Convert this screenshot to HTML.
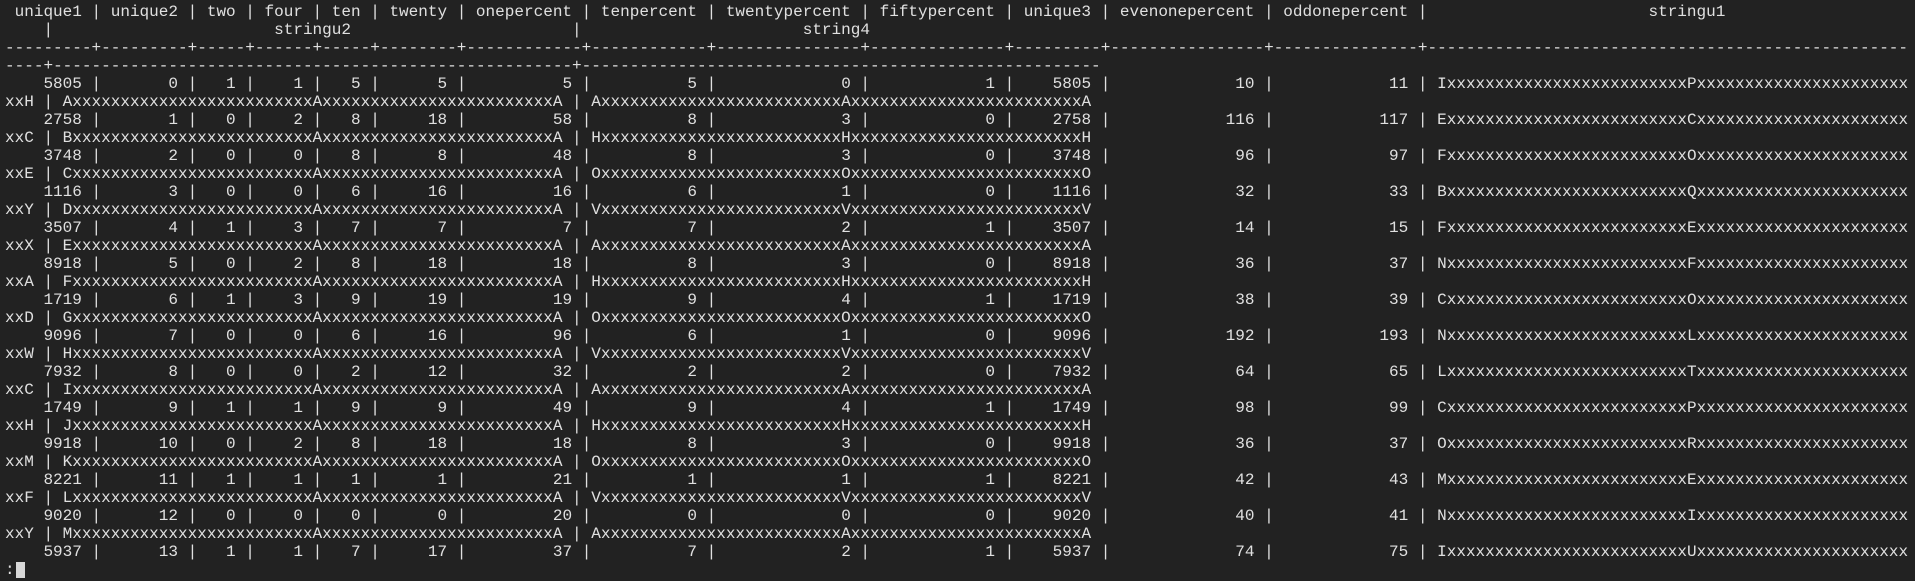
<!DOCTYPE html>
<html><head><meta charset="utf-8">
<style>
html,body{margin:0;padding:0;background:#222222;}
body{width:1915px;height:581px;overflow:hidden;position:relative;}
#t{position:absolute;left:5px;top:0;width:1910px;height:581px;font-family:"Liberation Mono",monospace;font-size:16.03px;color:#e0e0e0;}
#t div{position:absolute;left:0;height:18px;line-height:18px;white-space:pre;}
b{display:inline-block;text-align:right;font-weight:normal;vertical-align:top;height:18px;}
u{display:inline-block;text-decoration:none;overflow:hidden;vertical-align:top;height:18px;white-space:pre;}
.a{width:7ch}.c{width:3ch}.d{width:4ch}.f{width:6ch}.g{width:10ch}.i{width:13ch}.j{width:12ch}.l{width:14ch}
.p{width:25ch}.q{width:22ch}.o{width:24ch}
.d9{width:9ch}.d5{width:5ch}.d6{width:6ch}.d8{width:8ch}.d12{width:12ch}.d15{width:15ch}.d14{width:14ch}.d16{width:16ch}.d50{width:50ch}.d54{width:54ch}.d4{width:4ch}
#cur{position:absolute;left:16px;top:562px;width:9px;height:16px;background:#d8d8d8;}
</style></head><body>
<div id="t">
<div style="top:3px"> unique1 | unique2 | two | four | ten | twenty | onepercent | tenpercent | twentypercent | fiftypercent | unique3 | evenonepercent | oddonepercent |                       stringu1</div>
<div style="top:21px">    |                       stringu2                       |                       string4</div>
<div style="top:39px"><u class="d9">------------------</u>+<u class="d9">------------------</u>+<u class="d5">----------</u>+<u class="d6">----------</u>+<u class="d5">----------</u>+<u class="d8">------------</u>+<u class="d12">----------------</u>+<u class="d12">----------------</u>+<u class="d15">--------------------</u>+<u class="d14">--------------------</u>+<u class="d9">------------------</u>+<u class="d16">--------------------</u>+<u class="d15">--------------------</u>+<u class="d50">------------------------------------------------------------</u></div>
<div style="top:57px"><u class="d4">--------</u>+<u class="d54">------------------------------------------------------------</u>+<u class="d54">------------------------------------------------------------</u></div>
<div style="top:75px"> <b class=a>5805</b> | <b class=a>0</b> | <b class=c>1</b> | <b class=d>1</b> | <b class=c>5</b> | <b class=f>5</b> | <b class=g>5</b> | <b class=g>5</b> | <b class=i>0</b> | <b class=j>1</b> | <b class=a>5805</b> | <b class=l>10</b> | <b class=i>11</b> | I<u class=p>xxxxxxxxxxxxxxxxxxxxxxxxxxxxxx</u>P<u class=q>xxxxxxxxxxxxxxxxxxxxxxxxxxxxxx</u></div>
<div style="top:93px">xxH | A<u class=p>xxxxxxxxxxxxxxxxxxxxxxxxxxxxxx</u>A<u class=o>xxxxxxxxxxxxxxxxxxxxxxxxxxxxxx</u>A | A<u class=p>xxxxxxxxxxxxxxxxxxxxxxxxxxxxxx</u>A<u class=o>xxxxxxxxxxxxxxxxxxxxxxxxxxxxxx</u>A</div>
<div style="top:111px"> <b class=a>2758</b> | <b class=a>1</b> | <b class=c>0</b> | <b class=d>2</b> | <b class=c>8</b> | <b class=f>18</b> | <b class=g>58</b> | <b class=g>8</b> | <b class=i>3</b> | <b class=j>0</b> | <b class=a>2758</b> | <b class=l>116</b> | <b class=i>117</b> | E<u class=p>xxxxxxxxxxxxxxxxxxxxxxxxxxxxxx</u>C<u class=q>xxxxxxxxxxxxxxxxxxxxxxxxxxxxxx</u></div>
<div style="top:129px">xxC | B<u class=p>xxxxxxxxxxxxxxxxxxxxxxxxxxxxxx</u>A<u class=o>xxxxxxxxxxxxxxxxxxxxxxxxxxxxxx</u>A | H<u class=p>xxxxxxxxxxxxxxxxxxxxxxxxxxxxxx</u>H<u class=o>xxxxxxxxxxxxxxxxxxxxxxxxxxxxxx</u>H</div>
<div style="top:147px"> <b class=a>3748</b> | <b class=a>2</b> | <b class=c>0</b> | <b class=d>0</b> | <b class=c>8</b> | <b class=f>8</b> | <b class=g>48</b> | <b class=g>8</b> | <b class=i>3</b> | <b class=j>0</b> | <b class=a>3748</b> | <b class=l>96</b> | <b class=i>97</b> | F<u class=p>xxxxxxxxxxxxxxxxxxxxxxxxxxxxxx</u>O<u class=q>xxxxxxxxxxxxxxxxxxxxxxxxxxxxxx</u></div>
<div style="top:165px">xxE | C<u class=p>xxxxxxxxxxxxxxxxxxxxxxxxxxxxxx</u>A<u class=o>xxxxxxxxxxxxxxxxxxxxxxxxxxxxxx</u>A | O<u class=p>xxxxxxxxxxxxxxxxxxxxxxxxxxxxxx</u>O<u class=o>xxxxxxxxxxxxxxxxxxxxxxxxxxxxxx</u>O</div>
<div style="top:183px"> <b class=a>1116</b> | <b class=a>3</b> | <b class=c>0</b> | <b class=d>0</b> | <b class=c>6</b> | <b class=f>16</b> | <b class=g>16</b> | <b class=g>6</b> | <b class=i>1</b> | <b class=j>0</b> | <b class=a>1116</b> | <b class=l>32</b> | <b class=i>33</b> | B<u class=p>xxxxxxxxxxxxxxxxxxxxxxxxxxxxxx</u>Q<u class=q>xxxxxxxxxxxxxxxxxxxxxxxxxxxxxx</u></div>
<div style="top:201px">xxY | D<u class=p>xxxxxxxxxxxxxxxxxxxxxxxxxxxxxx</u>A<u class=o>xxxxxxxxxxxxxxxxxxxxxxxxxxxxxx</u>A | V<u class=p>xxxxxxxxxxxxxxxxxxxxxxxxxxxxxx</u>V<u class=o>xxxxxxxxxxxxxxxxxxxxxxxxxxxxxx</u>V</div>
<div style="top:219px"> <b class=a>3507</b> | <b class=a>4</b> | <b class=c>1</b> | <b class=d>3</b> | <b class=c>7</b> | <b class=f>7</b> | <b class=g>7</b> | <b class=g>7</b> | <b class=i>2</b> | <b class=j>1</b> | <b class=a>3507</b> | <b class=l>14</b> | <b class=i>15</b> | F<u class=p>xxxxxxxxxxxxxxxxxxxxxxxxxxxxxx</u>E<u class=q>xxxxxxxxxxxxxxxxxxxxxxxxxxxxxx</u></div>
<div style="top:237px">xxX | E<u class=p>xxxxxxxxxxxxxxxxxxxxxxxxxxxxxx</u>A<u class=o>xxxxxxxxxxxxxxxxxxxxxxxxxxxxxx</u>A | A<u class=p>xxxxxxxxxxxxxxxxxxxxxxxxxxxxxx</u>A<u class=o>xxxxxxxxxxxxxxxxxxxxxxxxxxxxxx</u>A</div>
<div style="top:255px"> <b class=a>8918</b> | <b class=a>5</b> | <b class=c>0</b> | <b class=d>2</b> | <b class=c>8</b> | <b class=f>18</b> | <b class=g>18</b> | <b class=g>8</b> | <b class=i>3</b> | <b class=j>0</b> | <b class=a>8918</b> | <b class=l>36</b> | <b class=i>37</b> | N<u class=p>xxxxxxxxxxxxxxxxxxxxxxxxxxxxxx</u>F<u class=q>xxxxxxxxxxxxxxxxxxxxxxxxxxxxxx</u></div>
<div style="top:273px">xxA | F<u class=p>xxxxxxxxxxxxxxxxxxxxxxxxxxxxxx</u>A<u class=o>xxxxxxxxxxxxxxxxxxxxxxxxxxxxxx</u>A | H<u class=p>xxxxxxxxxxxxxxxxxxxxxxxxxxxxxx</u>H<u class=o>xxxxxxxxxxxxxxxxxxxxxxxxxxxxxx</u>H</div>
<div style="top:291px"> <b class=a>1719</b> | <b class=a>6</b> | <b class=c>1</b> | <b class=d>3</b> | <b class=c>9</b> | <b class=f>19</b> | <b class=g>19</b> | <b class=g>9</b> | <b class=i>4</b> | <b class=j>1</b> | <b class=a>1719</b> | <b class=l>38</b> | <b class=i>39</b> | C<u class=p>xxxxxxxxxxxxxxxxxxxxxxxxxxxxxx</u>O<u class=q>xxxxxxxxxxxxxxxxxxxxxxxxxxxxxx</u></div>
<div style="top:309px">xxD | G<u class=p>xxxxxxxxxxxxxxxxxxxxxxxxxxxxxx</u>A<u class=o>xxxxxxxxxxxxxxxxxxxxxxxxxxxxxx</u>A | O<u class=p>xxxxxxxxxxxxxxxxxxxxxxxxxxxxxx</u>O<u class=o>xxxxxxxxxxxxxxxxxxxxxxxxxxxxxx</u>O</div>
<div style="top:327px"> <b class=a>9096</b> | <b class=a>7</b> | <b class=c>0</b> | <b class=d>0</b> | <b class=c>6</b> | <b class=f>16</b> | <b class=g>96</b> | <b class=g>6</b> | <b class=i>1</b> | <b class=j>0</b> | <b class=a>9096</b> | <b class=l>192</b> | <b class=i>193</b> | N<u class=p>xxxxxxxxxxxxxxxxxxxxxxxxxxxxxx</u>L<u class=q>xxxxxxxxxxxxxxxxxxxxxxxxxxxxxx</u></div>
<div style="top:345px">xxW | H<u class=p>xxxxxxxxxxxxxxxxxxxxxxxxxxxxxx</u>A<u class=o>xxxxxxxxxxxxxxxxxxxxxxxxxxxxxx</u>A | V<u class=p>xxxxxxxxxxxxxxxxxxxxxxxxxxxxxx</u>V<u class=o>xxxxxxxxxxxxxxxxxxxxxxxxxxxxxx</u>V</div>
<div style="top:363px"> <b class=a>7932</b> | <b class=a>8</b> | <b class=c>0</b> | <b class=d>0</b> | <b class=c>2</b> | <b class=f>12</b> | <b class=g>32</b> | <b class=g>2</b> | <b class=i>2</b> | <b class=j>0</b> | <b class=a>7932</b> | <b class=l>64</b> | <b class=i>65</b> | L<u class=p>xxxxxxxxxxxxxxxxxxxxxxxxxxxxxx</u>T<u class=q>xxxxxxxxxxxxxxxxxxxxxxxxxxxxxx</u></div>
<div style="top:381px">xxC | I<u class=p>xxxxxxxxxxxxxxxxxxxxxxxxxxxxxx</u>A<u class=o>xxxxxxxxxxxxxxxxxxxxxxxxxxxxxx</u>A | A<u class=p>xxxxxxxxxxxxxxxxxxxxxxxxxxxxxx</u>A<u class=o>xxxxxxxxxxxxxxxxxxxxxxxxxxxxxx</u>A</div>
<div style="top:399px"> <b class=a>1749</b> | <b class=a>9</b> | <b class=c>1</b> | <b class=d>1</b> | <b class=c>9</b> | <b class=f>9</b> | <b class=g>49</b> | <b class=g>9</b> | <b class=i>4</b> | <b class=j>1</b> | <b class=a>1749</b> | <b class=l>98</b> | <b class=i>99</b> | C<u class=p>xxxxxxxxxxxxxxxxxxxxxxxxxxxxxx</u>P<u class=q>xxxxxxxxxxxxxxxxxxxxxxxxxxxxxx</u></div>
<div style="top:417px">xxH | J<u class=p>xxxxxxxxxxxxxxxxxxxxxxxxxxxxxx</u>A<u class=o>xxxxxxxxxxxxxxxxxxxxxxxxxxxxxx</u>A | H<u class=p>xxxxxxxxxxxxxxxxxxxxxxxxxxxxxx</u>H<u class=o>xxxxxxxxxxxxxxxxxxxxxxxxxxxxxx</u>H</div>
<div style="top:435px"> <b class=a>9918</b> | <b class=a>10</b> | <b class=c>0</b> | <b class=d>2</b> | <b class=c>8</b> | <b class=f>18</b> | <b class=g>18</b> | <b class=g>8</b> | <b class=i>3</b> | <b class=j>0</b> | <b class=a>9918</b> | <b class=l>36</b> | <b class=i>37</b> | O<u class=p>xxxxxxxxxxxxxxxxxxxxxxxxxxxxxx</u>R<u class=q>xxxxxxxxxxxxxxxxxxxxxxxxxxxxxx</u></div>
<div style="top:453px">xxM | K<u class=p>xxxxxxxxxxxxxxxxxxxxxxxxxxxxxx</u>A<u class=o>xxxxxxxxxxxxxxxxxxxxxxxxxxxxxx</u>A | O<u class=p>xxxxxxxxxxxxxxxxxxxxxxxxxxxxxx</u>O<u class=o>xxxxxxxxxxxxxxxxxxxxxxxxxxxxxx</u>O</div>
<div style="top:471px"> <b class=a>8221</b> | <b class=a>11</b> | <b class=c>1</b> | <b class=d>1</b> | <b class=c>1</b> | <b class=f>1</b> | <b class=g>21</b> | <b class=g>1</b> | <b class=i>1</b> | <b class=j>1</b> | <b class=a>8221</b> | <b class=l>42</b> | <b class=i>43</b> | M<u class=p>xxxxxxxxxxxxxxxxxxxxxxxxxxxxxx</u>E<u class=q>xxxxxxxxxxxxxxxxxxxxxxxxxxxxxx</u></div>
<div style="top:489px">xxF | L<u class=p>xxxxxxxxxxxxxxxxxxxxxxxxxxxxxx</u>A<u class=o>xxxxxxxxxxxxxxxxxxxxxxxxxxxxxx</u>A | V<u class=p>xxxxxxxxxxxxxxxxxxxxxxxxxxxxxx</u>V<u class=o>xxxxxxxxxxxxxxxxxxxxxxxxxxxxxx</u>V</div>
<div style="top:507px"> <b class=a>9020</b> | <b class=a>12</b> | <b class=c>0</b> | <b class=d>0</b> | <b class=c>0</b> | <b class=f>0</b> | <b class=g>20</b> | <b class=g>0</b> | <b class=i>0</b> | <b class=j>0</b> | <b class=a>9020</b> | <b class=l>40</b> | <b class=i>41</b> | N<u class=p>xxxxxxxxxxxxxxxxxxxxxxxxxxxxxx</u>I<u class=q>xxxxxxxxxxxxxxxxxxxxxxxxxxxxxx</u></div>
<div style="top:525px">xxY | M<u class=p>xxxxxxxxxxxxxxxxxxxxxxxxxxxxxx</u>A<u class=o>xxxxxxxxxxxxxxxxxxxxxxxxxxxxxx</u>A | A<u class=p>xxxxxxxxxxxxxxxxxxxxxxxxxxxxxx</u>A<u class=o>xxxxxxxxxxxxxxxxxxxxxxxxxxxxxx</u>A</div>
<div style="top:543px"> <b class=a>5937</b> | <b class=a>13</b> | <b class=c>1</b> | <b class=d>1</b> | <b class=c>7</b> | <b class=f>17</b> | <b class=g>37</b> | <b class=g>7</b> | <b class=i>2</b> | <b class=j>1</b> | <b class=a>5937</b> | <b class=l>74</b> | <b class=i>75</b> | I<u class=p>xxxxxxxxxxxxxxxxxxxxxxxxxxxxxx</u>U<u class=q>xxxxxxxxxxxxxxxxxxxxxxxxxxxxxx</u></div>
<div style="top:561px">:</div>
</div>
<div id="cur"></div>
</body></html>
